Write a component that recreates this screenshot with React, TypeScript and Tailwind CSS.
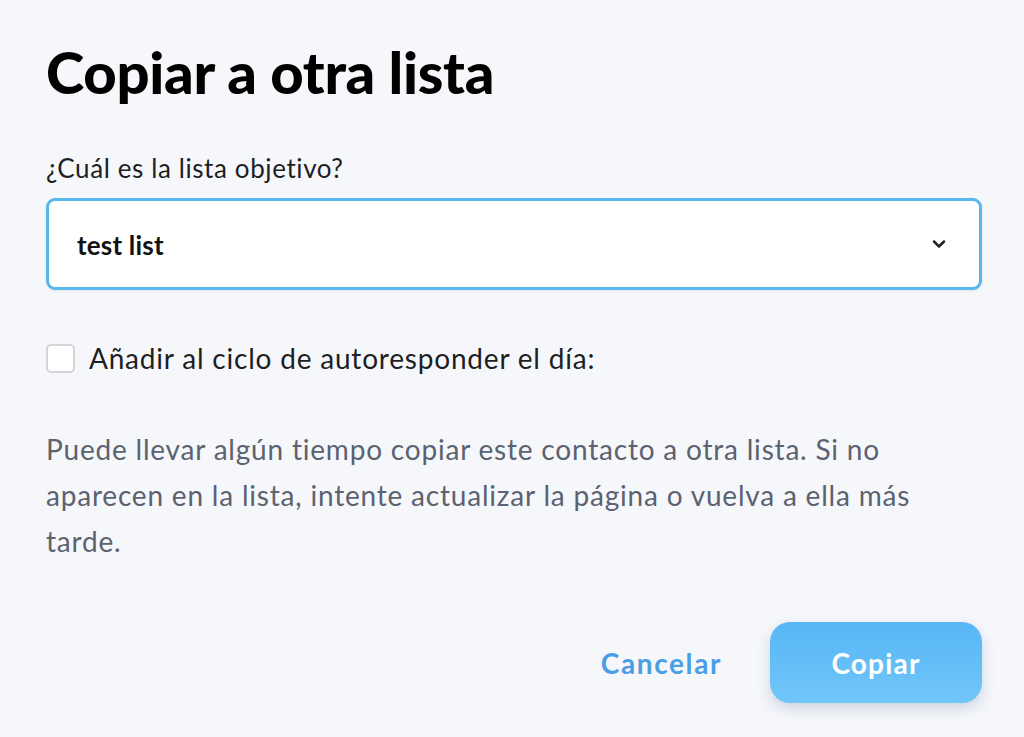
import { ChevronDown } from "lucide-react";

export default function App() {
  return (
    <div
      className="min-h-[737px] w-full bg-[#f6f7fb] pl-[46px] pr-[42px] pt-[38px] text-black"
      style={{ fontFamily: "Lato, 'Noto Sans', sans-serif" }}
    >
      <h1 className="text-[58px] font-black leading-[68px] tracking-[-0.3px]">
        Copiar a otra lista
      </h1>

      <label className="mt-[46px] block text-[26px] leading-[32px] tracking-[0.6px] text-[#1d1f24]">
        ¿Cuál es la lista objetivo?
      </label>

      <div className="mt-[14px] flex h-[92px] items-center justify-between rounded-[9px] border-[3px] border-[#5bb6ef] bg-white pl-[28px] pr-[30px] shadow-[0_1px_3px_rgba(0,0,0,0.08)]">
        <span className="mt-[2px] text-[26px] font-bold tracking-[0.2px] text-[#111]">
          test list
        </span>
        <ChevronDown className="h-[20px] w-[20px] text-[#222]" strokeWidth={3} />
      </div>

      <div className="mt-[52px] flex items-center gap-[14px]">
        <div className="h-[29px] w-[29px] rounded-[5px] border-2 border-[#d3d5da] bg-white" />
        <span className="text-[28px] leading-[32px] tracking-[0.8px] text-[#1d1f24]">
          Añadir al ciclo de autoresponder el día:
        </span>
      </div>

      <p className="mt-[52px] max-w-[900px] text-[28px] leading-[46px] tracking-[0.8px] text-[#5b6270]">
        Puede llevar algún tiempo copiar este contacto a otra lista. Si no
        aparecen en la lista, intente actualizar la página o vuelva a ella más
        tarde.
      </p>

      <div className="mt-[58px] flex items-center justify-end gap-[48px]">
        <button className="text-[28px] font-bold tracking-[1.6px] text-[#4a9ee6]">
          Cancelar
        </button>
        <button className="h-[81px] w-[212px] rounded-[20px] bg-gradient-to-b from-[#57b6f6] to-[#70c6f8] text-[28px] font-bold tracking-[1.2px] text-white shadow-[0_6px_14px_rgba(60,90,130,0.22)]">
          Copiar
        </button>
      </div>
    </div>
  );
}
